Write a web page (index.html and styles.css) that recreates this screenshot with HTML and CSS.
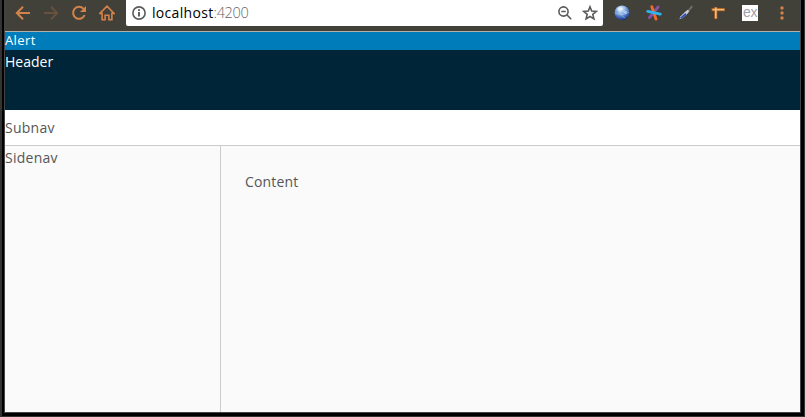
FILE: index.html
```html
<!DOCTYPE html>
<html lang="en">
<head>
<meta charset="utf-8">
<title>localhost:4200</title>
<link rel="stylesheet" href="styles.css">
</head>
<body>
<div class="frame">
<div class="window">
  <div class="toolbar">
    <div class="nav">
      <svg width="16" height="16" viewBox="0 0 16 16"><path d="M15 8H2M8 1.8L1.8 8L8 14.2"/></svg>
      <svg class="off" width="16" height="16" viewBox="0 0 16 16"><path d="M1 8h13M8 1.8L14.2 8L8 14.2"/></svg>
      <svg width="16" height="16" viewBox="0 0 16 16"><path d="M13.7 10A6 6 0 1 1 12.4 3.6L14 5.2"/><path class="solid" d="M15 1v6H9z"/></svg>
      <svg width="16" height="16" viewBox="0 0 16 16"><path d="M.9 8.4L8 1.2l7.1 7.2H12.9v6.4H9.9v-4.6H6.1v4.6H3.1V8.4z" stroke-width="1.6"/></svg>
    </div>
    <div class="address">
      <svg width="14" height="14" viewBox="0 0 14 14"><circle cx="7" cy="7" r="6.1"/><path d="M7 6v4.6M7 3.3v1.8" stroke-width="1.9"/></svg>
      <div class="url">localhost<span>:4200</span></div>
      <svg class="zoom" width="14" height="14" viewBox="0 0 14 14"><circle cx="5.5" cy="5.5" r="4.6"/><path d="M8.8 8.8l4.4 4.4M3.3 5.5h4.4"/></svg>
      <svg width="16" height="16" viewBox="0 0 16 16"><path d="M8 1.8l1.7 4.3 4.6.3-3.5 3 1.1 4.5L8 11.5l-3.9 2.4 1.1-4.5-3.5-3 4.6-.3z"/></svg>
    </div>
    <div class="extensions">
      <svg width="16" height="16" viewBox="0 0 16 16">
        <defs><radialGradient id="globe" cx=".42" cy=".25" r=".78"><stop offset="0" stop-color="#f0f7ff"/><stop offset=".4" stop-color="#86b0e2"/><stop offset=".75" stop-color="#3d62b4"/><stop offset="1" stop-color="#152870"/></radialGradient></defs>
        <circle cx="8" cy="7.8" r="7.4" fill="url(#globe)"/><path d="M1 8c4 2 10 2 14-1M4 3c1 4 3 8 7 10" fill="none" stroke="#d7e8fc" stroke-opacity=".4"/><path d="M3 4l4-2 2 2-4 2zM9 7l4-1-1 3z" fill="#edf6ff" opacity=".6"/>
      </svg>
      <svg width="16" height="16" viewBox="0 0 16 16" fill="none" stroke-width="2.8" stroke-linecap="round"><path d="M12.2 2L3.4 12.6" stroke="#8c50a6"/><path d="M5.8 1.7L10 14.1" stroke="#f26a2e"/><path d="M1.7 6.4L14.3 9.2" stroke="#2bb4ee"/></svg>
      <svg width="16" height="16" viewBox="0 0 16 16" fill="none"><path d="M9.5 6.8l4.8-5.6" stroke="#6f706e" stroke-width="1.8"/><path d="M7 9.3l3.4-3.8" stroke="#c9ced6" stroke-width="2.6"/><path d="M1.4 14.2l1.2-3L7.6 6.6l1.8 1.8-5 4.8z" fill="#d0daf0"/><path d="M2.6 13.4l5.4-4.8" stroke="#2d4bb9" stroke-width="1.8"/></svg>
      <svg width="16" height="16" viewBox="0 0 16 16" fill="none"><path d="M1.4 4.6h13.4M5.8 2v12" stroke="#9a531f" stroke-width="3.4"/><path d="M2.4 4.6h12M5.8 2.5v11" stroke="#f7b873" stroke-width="1.8"/></svg>
      <div class="ex">ex</div>
      <svg class="more" width="4" height="14" viewBox="0 0 4 14"><circle cx="2" cy="2" r="1.7"/><circle cx="2" cy="7" r="1.7"/><circle cx="2" cy="12" r="1.7"/></svg>
    </div>
  </div>
  <div class="alert">Alert</div>
  <header class="header">Header</header>
  <nav class="subnav">Subnav</nav>
  <div class="main">
    <aside class="sidenav">Sidenav</aside>
    <main class="content">Content</main>
  </div>
</div>
</div>
</body>
</html>
```
FILE: styles.css
```css
* { box-sizing: border-box; }
body { margin: 0; background: #333; overflow: hidden; }
.frame {
  height: 417px;
  padding-left: 2px;
  background: #333;
  border-right: 1px solid #333;
  border-bottom: 1px solid #333;
}
.window {
  height: 416px;
  display: flex;
  flex-direction: column;
  border: solid #000;
  border-width: 0 3px 3px 2px;
  box-shadow: inset 0 0 0 1px #444;
  padding: 0 1px 1px;
  font: 14px/18px "Open Sans", "Noto Sans", sans-serif;
  color: #565656;
}
.toolbar {
  height: 32px;
  flex: none;
  display: flex;
  background: #41413a;
  border-bottom: 1px solid #b3b0a9;
}
.nav { display: flex; gap: 12px; width: 121px; padding: 5px 0 0 10px; }
.nav svg { fill: none; stroke: #d5824a; stroke-width: 2; }
.nav .off { stroke: #68503e; }
.nav .solid { fill: #d5824a; stroke: none; }
.address {
  width: 477px;
  height: 26px;
  display: flex;
  align-items: center;
  padding: 0 5px 0 6px;
  background: #fff;
  border-radius: 0 0 2px 2px;
}
.address svg { fill: none; stroke: #5a5a5a; stroke-width: 1.6; }
.address .zoom { margin: 0 10px 0 auto; }
.url { margin-left: 6px; padding-bottom: 1px; letter-spacing: .32px; color: #000; white-space: nowrap; }
.url span { color: #666; font-weight: 300; font-size: 14.5px; letter-spacing: -.35px; }
.extensions { display: flex; gap: 16px; padding: 5px 0 0 11px; }
.ex {
  width: 16px;
  height: 16px;
  background: #fff;
  color: #a0a0aa;
  font: 14px/14px "Liberation Sans", sans-serif;
  letter-spacing: -.5px;
  text-align: center;
}
.more { margin: 1px 0 0 6px; fill: #d5824a; }
.alert { height: 18px; flex: none; line-height: 17px; background: #007cbb; color: #fff; font-size: 13px; letter-spacing: .4px; }
.header { height: 60px; flex: none; padding-top: 3px; background: #002538; color: #fff; }
.subnav { height: 36px; flex: none; padding-top: 9px; background: #fff; border-bottom: 1px solid #ccc; letter-spacing: .25px; }
.main { flex: 1; display: flex; background: #fafafa; letter-spacing: .25px; }
.sidenav { width: 216px; padding-top: 3px; border-right: 1px solid #ccc; }
.content { flex: 1; padding: 27px 24px; letter-spacing: .15px; }
```
